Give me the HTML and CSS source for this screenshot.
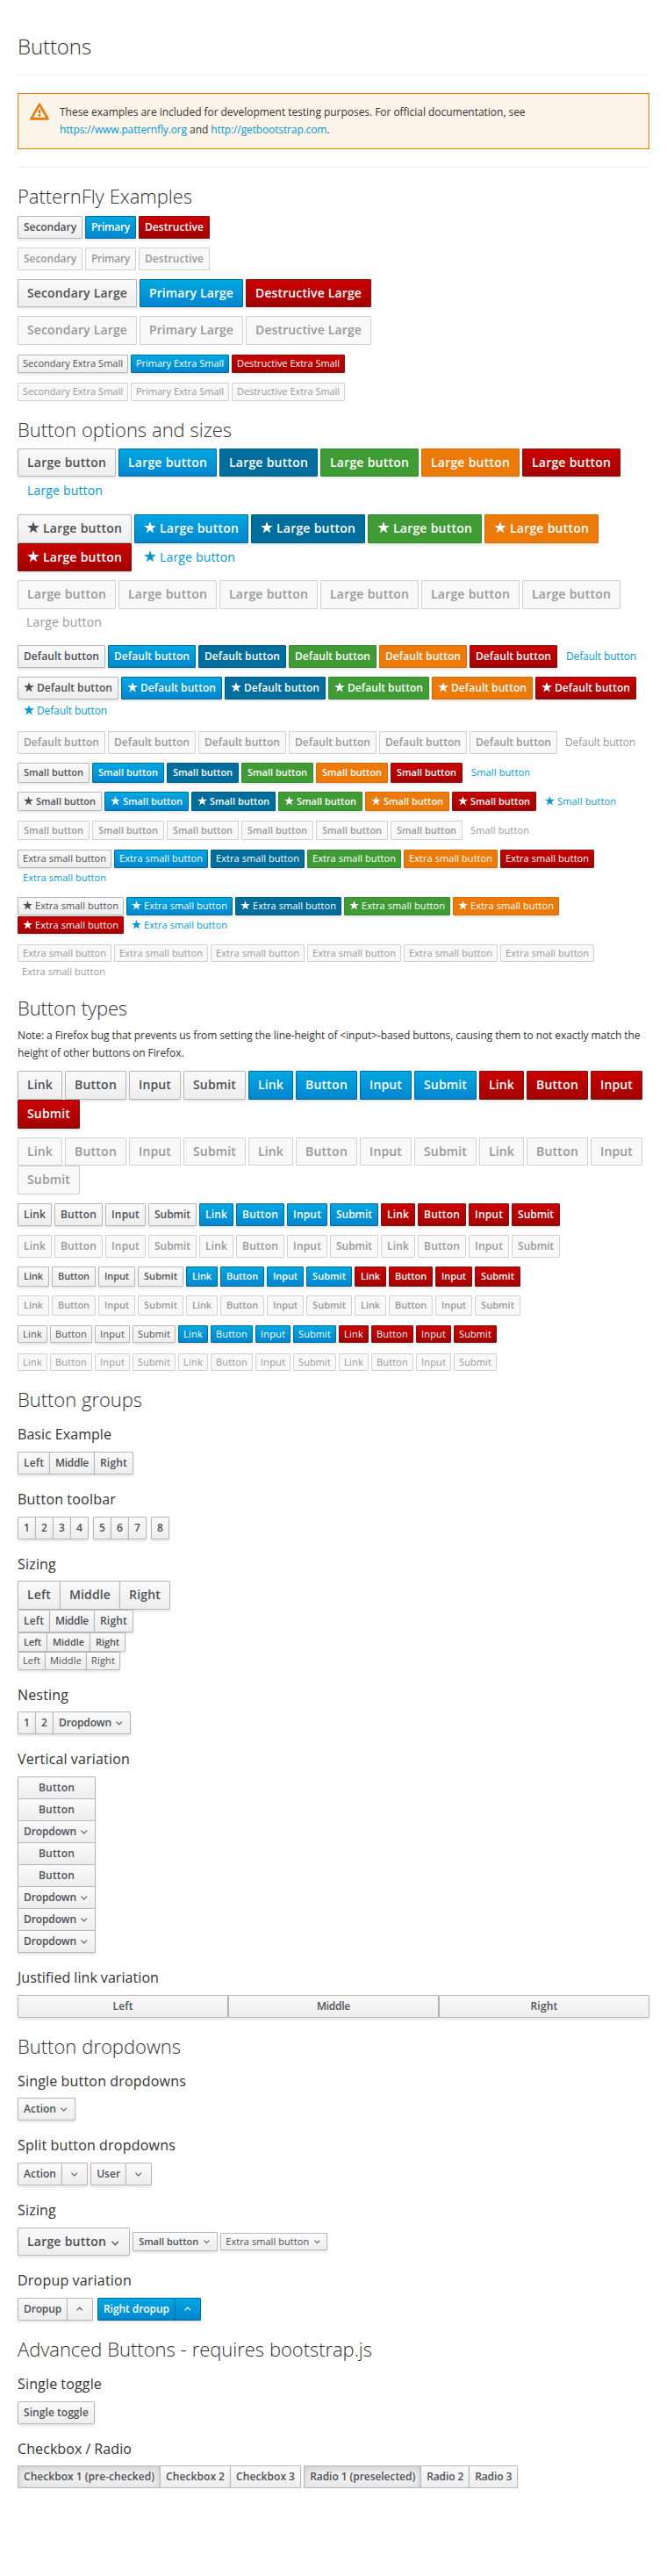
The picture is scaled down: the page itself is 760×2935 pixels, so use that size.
FILE: index.html
```html
<!DOCTYPE html>
<html lang="en">
<head>
<meta charset="utf-8">
<title>Buttons</title>
<link rel="stylesheet" href="styles.css">
</head>
<body>
<div class="container">
  <div class="page-header"><h1>Buttons</h1></div>
  <div class="alert">
    <svg class="alert-icon" viewBox="0 0 22 20"><path d="M11 1.8 L20.5 18.4 H1.5 Z" fill="none" stroke="#ec7a08" stroke-width="2.6" stroke-linejoin="round"/><path d="M11 7.8v4.2M11 13v2.8" stroke="#ec7a08" stroke-width="2.6"/></svg>
    These examples are included for development testing purposes. For official documentation, see <a href="#">https://www.patternfly.org</a> and <a href="#">http://getbootstrap.com</a>.
  </div>
  <hr>
  <h2>PatternFly Examples</h2>
  <div data-rows="patternfly"></div>
  <h2>Button options and sizes</h2>
  <div data-rows="options"></div>
  <h2>Button types</h2>
  <p>Note: a Firefox bug that prevents us from setting the line-height of &lt;input&gt;-based buttons, causing them to not exactly match the height of other buttons on Firefox.</p>
  <div data-rows="types"></div>

  <h2>Button groups</h2>
  <h3>Basic Example</h3>
  <div class="btn-group"><button class="btn btn-default">Left</button><button class="btn btn-default">Middle</button><button class="btn btn-default">Right</button></div>
  <h3>Button toolbar</h3>
  <div class="btn-toolbar">
    <div class="btn-group"><button class="btn btn-default">1</button><button class="btn btn-default">2</button><button class="btn btn-default">3</button><button class="btn btn-default">4</button></div>
    <div class="btn-group"><button class="btn btn-default">5</button><button class="btn btn-default">6</button><button class="btn btn-default">7</button></div>
    <div class="btn-group"><button class="btn btn-default">8</button></div>
  </div>
  <h3>Sizing</h3>
  <div class="btn-toolbar"><div class="btn-group"><button class="btn btn-default btn-lg">Left</button><button class="btn btn-default btn-lg">Middle</button><button class="btn btn-default btn-lg">Right</button></div></div>
  <div class="btn-toolbar"><div class="btn-group"><button class="btn btn-default">Left</button><button class="btn btn-default">Middle</button><button class="btn btn-default">Right</button></div></div>
  <div class="btn-toolbar"><div class="btn-group"><button class="btn btn-default btn-sm">Left</button><button class="btn btn-default btn-sm">Middle</button><button class="btn btn-default btn-sm">Right</button></div></div>
  <div class="btn-toolbar"><div class="btn-group"><button class="btn btn-default btn-xs">Left</button><button class="btn btn-default btn-xs">Middle</button><button class="btn btn-default btn-xs">Right</button></div></div>
  <h3>Nesting</h3>
  <div class="btn-group"><button class="btn btn-default">1</button><button class="btn btn-default">2</button><button class="btn btn-default">Dropdown <span class="caret"></span></button></div>
  <h3>Vertical variation</h3>
  <div class="btn-group-vertical">
    <button class="btn btn-default">Button</button>
    <button class="btn btn-default">Button</button>
    <button class="btn btn-default">Dropdown <span class="caret"></span></button>
    <button class="btn btn-default">Button</button>
    <button class="btn btn-default">Button</button>
    <button class="btn btn-default">Dropdown <span class="caret"></span></button>
    <button class="btn btn-default">Dropdown <span class="caret"></span></button>
    <button class="btn btn-default">Dropdown <span class="caret"></span></button>
  </div>
  <h3>Justified link variation</h3>
  <div class="btn-group-justified"><a class="btn btn-default">Left</a><a class="btn btn-default">Middle</a><a class="btn btn-default">Right</a></div>

  <h2>Button dropdowns</h2>
  <h3>Single button dropdowns</h3>
  <div class="btn-group"><button class="btn btn-default">Action <span class="caret"></span></button></div>
  <h3>Split button dropdowns</h3>
  <div class="btn-group"><button class="btn btn-default">Action</button><button class="btn btn-default toggle"><span class="caret"></span></button></div>
  <div class="btn-group"><button class="btn btn-default">User</button><button class="btn btn-default toggle"><span class="caret"></span></button></div>
  <h3>Sizing</h3>
  <div class="btn-group"><button class="btn btn-default btn-lg">Large button <span class="caret"></span></button></div>
  <div class="btn-group"><button class="btn btn-default btn-sm">Small button <span class="caret"></span></button></div>
  <div class="btn-group"><button class="btn btn-default btn-xs">Extra small button <span class="caret"></span></button></div>
  <h3>Dropup variation</h3>
  <div class="btn-toolbar">
    <div class="btn-group dropup"><button class="btn btn-default">Dropup</button><button class="btn btn-default toggle"><span class="caret"></span></button></div>
    <div class="btn-group dropup"><button class="btn btn-primary">Right dropup</button><button class="btn btn-primary toggle"><span class="caret"></span></button></div>
  </div>

  <h2>Advanced Buttons - requires bootstrap.js</h2>
  <h3>Single toggle</h3>
  <div><button class="btn btn-default">Single toggle</button></div>
  <h3>Checkbox / Radio</h3>
  <div class="btn-group"><label class="btn btn-default active">Checkbox 1 (pre-checked)</label><label class="btn btn-default">Checkbox 2</label><label class="btn btn-default">Checkbox 3</label></div>
  <div class="btn-group"><label class="btn btn-default active">Radio 1 (preselected)</label><label class="btn btn-default">Radio 2</label><label class="btn btn-default">Radio 3</label></div>
</div>
<script src="buttons.js"></script>
</body>
</html>
```
FILE: styles.css
```css
* { box-sizing: border-box; }
body {
  margin: 0;
  font-family: "Open Sans", "Liberation Sans", sans-serif;
  font-size: 12px;
  line-height: 1.66666667;
  color: #333;
  background: #fff;
}
.container { padding: 0 20px; display: flow-root; }
a { color: #0099d3; text-decoration: none; }
h1, h2, h3 { line-height: 1.1; margin: 20px 0 10px; font-weight: 300; }
h1 { font-size: 24px; margin-top: 0; }
h2 { font-size: 22px; }
h3 { font-size: 16px; font-weight: 400; }
p { margin: 0 0 10px; }
.row { line-height: 18px; word-spacing: -.12px; }
.row .btn-sm { margin-top: .3px; }
.row .btn-xs { margin-top: 1.35px; }
hr { margin: 20px 0; border: 0; border-top: 1px solid #eee; }
.page-header { margin: 40px 0 20px; padding-bottom: 9px; border-bottom: 1px solid #eee; }
.alert {
  position: relative;
  padding: 11px 60px 11px 47px;
  margin-bottom: 20px;
  border: 1px solid #ec7a08;
  background: #fdf4e9;
}
.alert-icon { position: absolute; left: 13px; top: 10px; width: 22px; height: 20px; }

.btn {
  display: inline-block;
  margin: 0;
  padding: 2px 6px;
  border: 1px solid transparent;
  border-radius: 1px;
  font: 600 12px/1.66666667 "Open Sans", "Liberation Sans", sans-serif;
  text-align: center;
  vertical-align: middle;
  white-space: nowrap;
  box-shadow: 0 2px 3px rgba(0, 0, 0, .1);
  background-repeat: repeat-x;
}
.btn-default { color: #4d5258; border-color: #b7b7b7; background-color: #eee; background-image: linear-gradient(#fafafa, #ededed); }
.btn-primary { color: #fff; border-color: #006e9c; background-color: #0085cf; background-image: linear-gradient(#00a8e1, #0085cf); }
.btn-info { color: #fff; border-color: #005c83; background-color: #006e9c; }
.btn-success { color: #fff; border-color: #37892f; background-color: #3f9c35; }
.btn-warning { color: #fff; border-color: #d36d07; background-color: #ec7a08; }
.btn-danger { color: #fff; border-color: #781919; background-color: #a30000; background-image: linear-gradient(#c00, #a30000); }
.btn-link { color: #0099d3; font-weight: 400; box-shadow: none; background-color: transparent; }
.btn-lg { padding: 6px 10px; font-size: 14px; line-height: 1.3333333; }
.btn-sm { font-size: 11px; line-height: 1.5; }
.btn-xs { padding: 1px 5px; font-size: 11px; line-height: 1.5; font-weight: 400; }
.btn.disabled { color: #999; background: #f8f8f8; border-color: #d1d1d1; box-shadow: none; }
.btn-link.disabled.disabled { background: none; border: 0; }
.btn.active { background: #eee; box-shadow: inset 0 2px 8px rgba(0, 0, 0, .16); }
.star { position: relative; top: 1px; display: inline-block; width: 1em; height: 1em; fill: currentColor; }

.btn-group { position: relative; display: inline-block; vertical-align: middle; }
.btn-group > .btn { position: relative; float: left; }
.btn-group > .btn + .btn { margin-left: -1px; }
.btn-group > .toggle { padding-left: 8px; padding-right: 8px; }
.btn-toolbar { margin-left: -5px; display: flow-root; }
.btn-toolbar > .btn-group { float: left; margin-left: 5px; }
.btn-group-vertical { display: inline-flex; flex-direction: column; vertical-align: middle; }
.btn-group-vertical > .btn { position: relative; }
.btn-group-vertical > .btn + .btn { margin-top: -1px; }
.btn-group-justified { display: grid; grid-template-columns: repeat(3, 1fr); }
.caret { position: relative; display: inline-block; width: 12px; height: 9px; vertical-align: baseline; }
.caret svg { position: absolute; left: 50%; top: 3px; width: .62em; height: .42em; margin-left: -.31em; fill: none; stroke: currentColor; stroke-width: 1.1; }
.dropup .caret svg { top: 2px; transform: scaleY(-1); }
```
FILE: buttons.js
```js
const STAR = '<svg class="star" viewBox="0 0 14 14"><path d="M7 .2 8.7 5.1H13.9L9.7 8.3 11.3 13.3 7 10.2 2.7 13.3 4.3 8.3 .1 5.1H5.3Z"/></svg> ';
const CARET = '<svg viewBox="0 0 7.4 5"><path d="M.5.6 3.7 4 6.9.6"/></svg>';
const rows = { patternfly: [], options: [], types: [] };
const sizes = [['Large', 'btn-lg'], ['Default', ''], ['Small', 'btn-sm'], ['Extra small', 'btn-xs']];

for (const [suffix, size] of [['', ''], [' Large', 'btn-lg'], [' Extra Small', 'btn-xs']])
  for (const off of ['', 'disabled'])
    rows.patternfly.push([['Secondary', 'default'], ['Primary', 'primary'], ['Destructive', 'danger']]
      .map(([t, k]) => `<button class="btn btn-${k} ${size} ${off}">${t}${suffix}</button>`));

for (const [label, size] of sizes)
  for (const [icon, off] of [['', ''], [STAR, ''], ['', 'disabled']])
    rows.options.push(['default', 'primary', 'info', 'success', 'warning', 'danger', 'link']
      .map(k => `<button class="btn btn-${k} ${size} ${off}">${icon}${label} button</button>`));

for (const [, size] of sizes)
  for (const off of ['', 'disabled'])
    rows.types.push(['default', 'primary', 'danger'].flatMap(k => {
      const c = `class="btn btn-${k} ${size} ${off}"`;
      return [`<a ${c}>Link</a>`, `<button ${c}>Button</button>`, `<input ${c} type="button" value="Input">`, `<input ${c} type="submit" value="Submit">`];
    }));

for (const el of document.querySelectorAll('[data-rows]'))
  el.outerHTML = rows[el.dataset.rows].map(r => `<p class="row">${r.join('\n')}</p>`).join('');
for (const el of document.querySelectorAll('.caret')) el.innerHTML = CARET;

const ctx = document.createElement('canvas').getContext('2d');
for (const el of document.querySelectorAll('.btn, h1, h2, h3, p:not(.row), .alert, .alert a')) {
  const text = (el.value || [...el.childNodes].filter(n => n.nodeType === 3).map(n => n.data).join(' ')).trim();
  if (!text) continue;
  const cs = getComputedStyle(el);
  ctx.font = `${cs.fontWeight} ${cs.fontSize} ${cs.fontFamily}`;
  const width = s => ctx.measureText(s).width;
  let diff = 0, count = 0;
  for (const word of text.split(/\s+/)) {
    diff += [...word].reduce((sum, ch) => sum + Math.round(width(ch)), 0) - width(word);
    count += word.length;
  }
  // The semibold "m" at 11px and the long large labels need one more pixel.
  const semiboldM = cs.fontWeight === '600' && cs.fontSize === '11px' && text.includes('m');
  if (semiboldM || text.endsWith(' Large')) diff += 1;
  const spacing = diff / count;
  const space = width(' ');
  el.style.letterSpacing = spacing.toFixed(4) + 'px';
  el.style.wordSpacing = (Math.round(space) - space - spacing).toFixed(4) + 'px';
}
```
